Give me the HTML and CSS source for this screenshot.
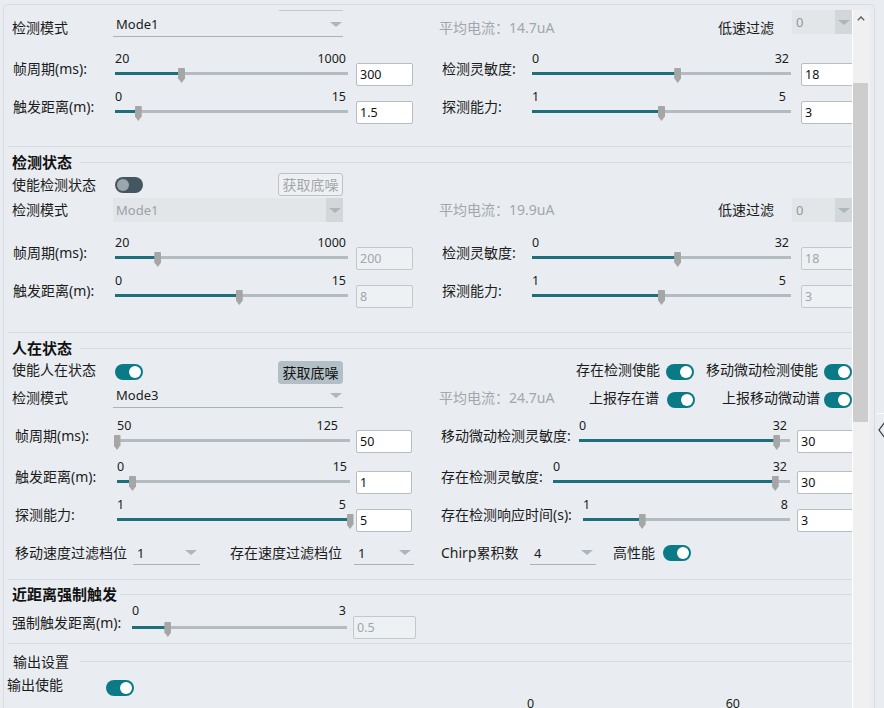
FILE: index.html
```html
<!DOCTYPE html>
<html lang="zh-CN">
<head>
<meta charset="utf-8">
<title>雷达参数配置</title>
<link rel="stylesheet" href="styles.css">
</head>
<body>
<div class="frame">
 <div class="view">
  <div class="stub"></div>

  <!-- section 1 (partially scrolled) -->
  <div class="row pl8 h40">
   <div class="lbl w101 mt7">检测模式</div>
   <div class="sel w230 h25 mt1"><span>Mode1</span><i class="arr"></i></div>
   <div class="lbl gray ml96 w279 mt7">平均电流：14.7uA</div>
   <div class="lbl w74 mt7">低速过滤</div>
   <div class="cb w60 mtn1"><span class="cb-t">0</span><span class="cb-btn"><i class="arr"></i></span></div>
  </div>

  <div class="row pl9 h38">
   <div class="lbl slbl w102">帧周期(ms):</div>
   <div class="sl w233" style="--v:28.571%"><div class="sl-nums"><span>20</span><span>1000</span></div><div class="sl-area"><div class="sl-track"><div class="sl-fill"></div></div><div class="sl-thumb"></div></div></div>
   <div class="num ml8 w57">300</div>
   <div class="lbl slbl ml29 w90">检测灵敏度:</div>
   <div class="sl w259" style="--v:56.25%"><div class="sl-nums"><span>0</span><span>32</span></div><div class="sl-area"><div class="sl-track"><div class="sl-fill"></div></div><div class="sl-thumb"></div></div></div>
   <div class="num ml10 w57">18</div>
  </div>

  <div class="row pl9 h37">
   <div class="lbl slbl w102">触发距离(m):</div>
   <div class="sl w233" style="--v:10%"><div class="sl-nums"><span>0</span><span>15</span></div><div class="sl-area"><div class="sl-track"><div class="sl-fill"></div></div><div class="sl-thumb"></div></div></div>
   <div class="num ml8 w57">1.5</div>
   <div class="lbl slbl ml29 w90">探测能力:</div>
   <div class="sl w259" style="--v:50%"><div class="sl-nums pr5"><span>1</span><span>5</span></div><div class="sl-area"><div class="sl-track"><div class="sl-fill"></div></div><div class="sl-thumb"></div></div></div>
   <div class="num ml10 w57">3</div>
  </div>

  <div class="sep mt20"></div>

  <!-- section 2 -->
  <div class="ttl pl8 mt5"><span class="ttl-t">检测状态</span><i class="ttl-line ml8"></i></div>

  <div class="row c pl8 h23 mt1">
   <div class="lbl w103">使能检测状态</div>
   <div class="tg off"></div>
   <div class="btn dis ml135">获取底噪</div>
  </div>

  <div class="row c pl8 h24 mt2">
   <div class="lbl w101">检测模式</div>
   <div class="cb w230"><span class="cb-t pl3">Mode1</span><span class="cb-btn"><i class="arr"></i></span></div>
   <div class="lbl gray ml96 w279">平均电流：19.9uA</div>
   <div class="lbl w74">低速过滤</div>
   <div class="cb w60"><span class="cb-t">0</span><span class="cb-btn"><i class="arr"></i></span></div>
  </div>

  <div class="row pl9 h38 mt13">
   <div class="lbl slbl w102">帧周期(ms):</div>
   <div class="sl w233" style="--v:18.367%"><div class="sl-nums"><span>20</span><span>1000</span></div><div class="sl-area"><div class="sl-track"><div class="sl-fill"></div></div><div class="sl-thumb"></div></div></div>
   <div class="num dis ml8 w57">200</div>
   <div class="lbl slbl ml29 w90">检测灵敏度:</div>
   <div class="sl w259" style="--v:56.25%"><div class="sl-nums"><span>0</span><span>32</span></div><div class="sl-area"><div class="sl-track"><div class="sl-fill"></div></div><div class="sl-thumb"></div></div></div>
   <div class="num dis ml10 w57">18</div>
  </div>

  <div class="row pl9 h37">
   <div class="lbl slbl w102">触发距离(m):</div>
   <div class="sl w233" style="--v:53.333%"><div class="sl-nums"><span>0</span><span>15</span></div><div class="sl-area"><div class="sl-track"><div class="sl-fill"></div></div><div class="sl-thumb"></div></div></div>
   <div class="num dis ml8 w57">8</div>
   <div class="lbl slbl ml29 w90">探测能力:</div>
   <div class="sl w259" style="--v:50%"><div class="sl-nums pr5"><span>1</span><span>5</span></div><div class="sl-area"><div class="sl-track"><div class="sl-fill"></div></div><div class="sl-thumb"></div></div></div>
   <div class="num dis ml10 w57">3</div>
  </div>

  <div class="sep mt22"></div>

  <!-- section 3 -->
  <div class="ttl pl8 mt5"><span class="ttl-t">人在状态</span><i class="ttl-line ml8"></i></div>

  <div class="row c pl8 h24 mt2">
   <div class="lbl w103 mb4">使能人在状态</div>
   <div class="tg"></div>
   <div class="btn on ml135">获取底噪</div>
   <div class="lbl ml233 w84 mb4">存在检测使能</div>
   <div class="tg ml6"></div>
   <div class="lbl ml12 w112 mb4">移动微动检测使能</div>
   <div class="tg ml6"></div>
  </div>

  <div class="row c pl8 h24 mt2">
   <div class="lbl w101">检测模式</div>
   <div class="sel w230 h25 top mtn3"><span>Mode3</span><i class="arr"></i></div>
   <div class="lbl gray ml96 w150">平均电流：24.7uA</div>
   <div class="lbl w70">上报存在谱</div>
   <div class="tg ml8 mt4"></div>
   <div class="lbl ml27 w98">上报移动微动谱</div>
   <div class="tg ml4 mt4"></div>
  </div>

  <div class="row pl11 h41 mt8">
   <div class="lbl slbl w102">帧周期(ms):</div>
   <div class="sl w233" style="--v:0%"><div class="sl-nums pr12"><span>50</span><span>125</span></div><div class="sl-area"><div class="sl-track"><div class="sl-fill"></div></div><div class="sl-thumb"></div></div></div>
   <div class="num ml6 w56">50</div>
   <div class="lbl slbl ml29 w138">移动微动检测灵敏度:</div>
   <div class="sl w211" style="--v:93.75%"><div class="sl-nums pr3"><span>0</span><span>32</span></div><div class="sl-area"><div class="sl-track"><div class="sl-fill"></div></div><div class="sl-thumb"></div></div></div>
   <div class="num ml7 w57">30</div>
  </div>

  <div class="row pl11 h38">
   <div class="lbl slbl w102">触发距离(m):</div>
   <div class="sl w233" style="--v:6.667%"><div class="sl-nums pr3"><span>0</span><span>15</span></div><div class="sl-area"><div class="sl-track"><div class="sl-fill"></div></div><div class="sl-thumb"></div></div></div>
   <div class="num ml6 w56">1</div>
   <div class="lbl slbl ml29 w112">存在检测灵敏度:</div>
   <div class="sl w237" style="--v:93.75%"><div class="sl-nums pr3"><span>0</span><span>32</span></div><div class="sl-area"><div class="sl-track"><div class="sl-fill"></div></div><div class="sl-thumb"></div></div></div>
   <div class="num ml7 w57">30</div>
  </div>

  <div class="row pl11 h44">
   <div class="lbl slbl w102">探测能力:</div>
   <div class="sl w233" style="--v:100%"><div class="sl-nums pr4"><span>1</span><span>5</span></div><div class="sl-area"><div class="sl-track"><div class="sl-fill"></div></div><div class="sl-thumb"></div></div></div>
   <div class="num ml6 w56">5</div>
   <div class="lbl slbl ml29 w142">存在检测响应时间(s):</div>
   <div class="sl w207" style="--v:28.571%"><div class="sl-nums"><span>1</span><span>8</span></div><div class="sl-area"><div class="sl-track"><div class="sl-fill"></div></div><div class="sl-thumb"></div></div></div>
   <div class="num ml7 w57">3</div>
  </div>

  <div class="row c pl11 h24">
   <div class="lbl w118">移动速度过滤档位</div>
   <div class="sel small w67 h24"><span>1</span><i class="arr"></i></div>
   <div class="lbl ml30 w124">存在速度过滤档位</div>
   <div class="sel small w60 h24"><span>1</span><i class="arr"></i></div>
   <div class="lbl ml27 w89">Chirp累积数</div>
   <div class="sel small w66 h24"><span>4</span><i class="arr"></i></div>
   <div class="lbl ml17 w50">高性能</div>
   <div class="tg"></div>
  </div>

  <div class="sep mt14"></div>

  <!-- section 4 -->
  <div class="ttl pl8 mt4 h19"><span class="ttl-t">近距离强制触发</span><i class="ttl-line ml3 lmt10"></i></div>

  <div class="row pl8 h40">
   <div class="lbl slbl low w120">强制触发距离(m):</div>
   <div class="sl low w215" style="--v:16.667%"><div class="sl-nums pr1"><span>0</span><span>3</span></div><div class="sl-area"><div class="sl-track"><div class="sl-fill"></div></div><div class="sl-thumb"></div></div></div>
   <div class="num dis low ml6 w63">0.5</div>
  </div>

  <div class="sep"></div>

  <!-- section 5 -->
  <div class="ttl pl9 mt8"><span class="ttl-t plain">输出设置</span><i class="ttl-line ml11 lmt9"></i></div>

  <div class="row pl3 h21 mt3">
   <div class="lbl w99">输出使能</div>
   <div class="tg mt5"></div>
  </div>

  <div class="row pl523">
   <div class="sl-nums w215"><span>0</span><span>60</span></div>
  </div>
 </div>

 <div class="sb">
  <div class="sb-btn"><svg width="8" height="5" viewBox="0 0 8 5"><polyline points="0.8,4.3 4,1 7.2,4.3" fill="none" stroke="#5c5c5c" stroke-width="1.3"/></svg></div>
  <div class="sb-thumb"></div>
 </div>
</div>

<div class="side">
 <div class="side-line"></div>
 <div class="side-chev"><svg width="7" height="16" viewBox="0 0 7 16"><polyline points="6.5,0.7 1,8 6.5,15.3" fill="none" stroke="#3a3a3a" stroke-width="1.2"/></svg></div>
</div>
</body>
</html>
```

FILE: styles.css
```css
html, body {
  margin: 0;
  padding: 0;
}
body {
  background: #e9edf1;
  font-family: "Noto Sans", "Noto Sans CJK SC", sans-serif;
  font-size: 14px;
  color: #1b1b1b;
  display: flex;
  align-items: flex-start;
  height: 708px;
  overflow: hidden;
}

.frame {
  flex: none;
  box-sizing: border-box;
  width: 872px;
  height: 704px;
  margin: 4px 0 0 3px;
  padding: 5px 4px 0 0;
  border: 1px solid #d6dce1;
  border-bottom: none;
  border-radius: 5px 5px 0 0;
  display: flex;
  align-items: stretch;
}
.view {
  flex: none;
  width: 848px;
  overflow: hidden;
}

.sb {
  flex: none;
  width: 17px;
  border-left: 1px solid #ffffff;
  background: #f0f0f0;
  display: flex;
  flex-direction: column;
}
.sb-btn {
  height: 17px;
  display: flex;
  align-items: center;
  justify-content: center;
  padding-right: 2px;
}
.sb-thumb {
  margin-top: 56px;
  width: 15px;
  height: 339px;
  background: #cdcdcd;
}

.side {
  flex: none;
  width: 9px;
  padding-top: 413px;
}
.side-line {
  margin-left: 2px;
  height: 1px;
  background: #ffffff;
}
.side-chev {
  margin: 8px 0 0 3px;
  height: 16px;
}
.side-chev svg { display: block; }

/* rows */
.stub {
  margin-left: 275px;
  width: 64px;
  height: 1px;
  background: #c3c9ce;
}
.row {
  display: flex;
  align-items: flex-start;
  white-space: nowrap;
}
.row > * { flex: none; }
.row.c { align-items: center; }
.sep {
  height: 1px;
  margin-left: 4px;
  background: #d5dbe0;
}

.lbl {
  line-height: 20px;
  font-size: 14px;
}
.gray { color: #a1a7ac; }
.slbl { margin-top: 8px; }
.slbl.low { margin-top: 10px; }

/* titles */
.ttl {
  display: flex;
  align-items: flex-start;
  height: 20px;
}
.ttl-t {
  flex: none;
  font-size: 15px;
  font-weight: bold;
  line-height: 20px;
  color: #111;
}
.ttl-t.plain {
  font-size: 14px;
  font-weight: normal;
  color: #1b1b1b;
}
.ttl-line {
  flex: 1;
  height: 1px;
  margin-top: 10px;
  background: #d5dbe0;
}
.ttl-line.lmt10 { margin-top: 10px; }
.ttl-line.lmt9 { margin-top: 9px; }

/* select with underline */
.sel {
  box-sizing: border-box;
  display: flex;
  align-items: center;
  justify-content: space-between;
  padding: 0 1px 0 3px;
  border-bottom: 1px solid #a9b3ba;
  font-size: 13px;
  line-height: 20px;
}
.sel.small { padding: 0 3px 0 4px; }
.sel.top { align-self: flex-start; }
.arr {
  display: block;
  width: 0;
  height: 0;
  border-left: 6px solid transparent;
  border-right: 6px solid transparent;
  border-top: 5px solid #abb6bd;
}

/* disabled-look combo with button */
.cb {
  box-sizing: border-box;
  display: flex;
  height: 24px;
  background: #e3e6e9;
  font-size: 13px;
}
.cb-t {
  flex: 1;
  padding-left: 4px;
  line-height: 24px;
  color: #8f989f;
}
.cb-t.pl3 { padding-left: 3px; color: #9aa1a7; }
.cb-btn {
  flex: none;
  width: 17px;
  background: #d4d7da;
  display: flex;
  align-items: center;
  justify-content: center;
}

/* slider */
.sl {
  display: flex;
  flex-direction: column;
}
.sl-nums {
  display: flex;
  justify-content: space-between;
  height: 16px;
  line-height: 16px;
  font-size: 12.5px;
  padding-right: 2px;
  box-sizing: border-box;
}
.sl-nums.pr1 { padding-right: 1px; }
.sl-nums.pr3 { padding-right: 3px; }
.sl-nums.pr4 { padding-right: 4px; }
.sl-nums.pr5 { padding-right: 5px; }
.sl-nums.pr12 { padding-right: 12px; }
.sl-area {
  position: relative;
  height: 18px;
}
.sl.low .sl-area { margin-top: 2px; }
.sl-track {
  margin-top: 5px;
  height: 3px;
  background: #b2bcc2;
}
.sl-fill {
  width: var(--v);
  height: 100%;
  background: #1d6f7c;
}
.sl-thumb {
  position: absolute;
  top: 1px;
  left: calc(var(--v) - 3.5px);
  width: 7px;
  height: 15px;
  background: #a6a6a6;
  border-radius: 1px 1px 0 0;
  clip-path: polygon(0 0, 100% 0, 100% 68%, 50% 100%, 0 68%);
}

/* numeric box */
.num {
  box-sizing: border-box;
  margin-top: 12px;
  height: 23px;
  padding-left: 3px;
  border: 1px solid #b6bdc3;
  border-radius: 2px;
  background: #ffffff;
  font-size: 12.5px;
  line-height: 21px;
  color: #111;
}
.num.dis {
  background: #eef1f3;
  border-color: #c3c8cc;
  color: #a0a6ab;
}
.num.low { margin-top: 13px; }

/* toggle */
.tg {
  position: relative;
  width: 28px;
  height: 16px;
  border-radius: 8px;
  background: #0a7a87;
}
.tg::after {
  content: "";
  position: absolute;
  top: 2px;
  right: 2px;
  width: 12px;
  height: 12px;
  border-radius: 50%;
  background: #ffffff;
}
.tg.off { background: #44565f; }
.tg.off::after {
  right: auto;
  left: 2px;
  background: #9ba7ad;
}

/* button */
.btn {
  box-sizing: border-box;
  width: 65px;
  height: 23px;
  border-radius: 3px;
  font-size: 14px;
  line-height: 21px;
  text-align: center;
}
.btn.dis {
  border: 1px solid #bcc2c7;
  background: #eef0f2;
  color: #a2a7ac;
}
.btn.on {
  border: 1px solid #b3bfc6;
  background: #b3bfc6;
  color: #111;
}

/* spacing utilities */
.pl3 { padding-left: 3px; }
.pl8 { padding-left: 8px; }
.pl9 { padding-left: 9px; }
.pl11 { padding-left: 11px; }
.pl523 { padding-left: 523px; }
.mt1 { margin-top: 1px; }
.mt2 { margin-top: 2px; }
.mt3 { margin-top: 3px; }
.mt4 { margin-top: 4px; }
.mt5 { margin-top: 5px; }
.mt7 { margin-top: 7px; }
.mt8 { margin-top: 8px; }
.mt13 { margin-top: 13px; }
.mt14 { margin-top: 14px; }
.mt20 { margin-top: 20px; }
.mt22 { margin-top: 22px; }
.mtn1 { margin-top: -1px; }
.mtn3 { margin-top: -3px; }
.mb4 { margin-bottom: 4px; }
.ml3 { margin-left: 3px; }
.ml4 { margin-left: 4px; }
.ml6 { margin-left: 6px; }
.ml7 { margin-left: 7px; }
.ml8 { margin-left: 8px; }
.ml10 { margin-left: 10px; }
.ml11 { margin-left: 11px; }
.ml12 { margin-left: 12px; }
.ml17 { margin-left: 17px; }
.ml27 { margin-left: 27px; }
.ml29 { margin-left: 29px; }
.ml30 { margin-left: 30px; }
.ml96 { margin-left: 96px; }
.ml135 { margin-left: 135px; }
.ml233 { margin-left: 233px; }

.h19 { height: 19px; }
.h21 { height: 21px; }
.h23 { height: 23px; }
.h24 { height: 24px; }
.h25 { height: 25px; }
.h37 { height: 37px; }
.h38 { height: 38px; }
.h40 { height: 40px; }
.h41 { height: 41px; }
.h44 { height: 44px; }

.w50 { width: 50px; }
.w56 { width: 56px; }
.w57 { width: 57px; }
.w60 { width: 60px; }
.w63 { width: 63px; }
.w66 { width: 66px; }
.w67 { width: 67px; }
.w70 { width: 70px; }
.w74 { width: 74px; }
.w84 { width: 84px; }
.w89 { width: 89px; }
.w90 { width: 90px; }
.w98 { width: 98px; }
.w99 { width: 99px; }
.w101 { width: 101px; }
.w102 { width: 102px; }
.w103 { width: 103px; }
.w112 { width: 112px; }
.w118 { width: 118px; }
.w120 { width: 120px; }
.w124 { width: 124px; }
.w138 { width: 138px; }
.w142 { width: 142px; }
.w150 { width: 150px; }
.w207 { width: 207px; }
.w211 { width: 211px; }
.w215 { width: 215px; }
.w230 { width: 230px; }
.w233 { width: 233px; }
.w237 { width: 237px; }
.w259 { width: 259px; }
.w279 { width: 279px; }
```
